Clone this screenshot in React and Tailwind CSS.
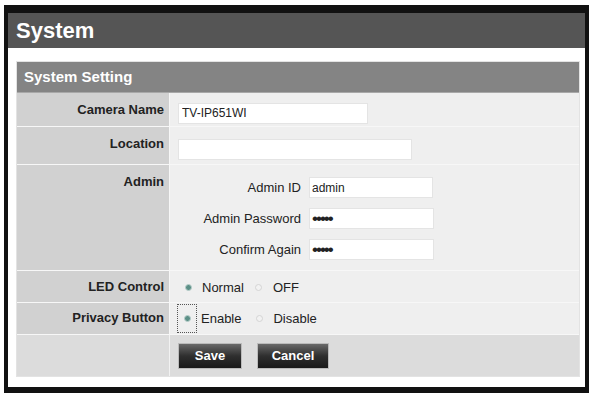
import { useState } from 'react'

function Radio({ checked, focused, label }) {
  return (
    <label className="flex items-center">
      <span
        className={`flex items-center justify-center w-[20px] h-[29px] ${
          focused ? 'border border-dotted border-[#555]' : 'border border-transparent'
        }`}
      >
        <span
          className={`w-[7px] h-[7px] rounded-full border ${
            checked ? 'bg-[#5b8f86] border-[#b9cfcb]' : 'bg-[#f2f2f2] border-[#d4d4d4]'
          }`}
        />
      </span>
      <span className="ml-[4px] text-[13px] text-[#222]">{label}</span>
    </label>
  )
}

function Row({ label, height, children, labelTop = 'pt-[7px]', last }) {
  return (
    <div className={`flex ${last ? '' : 'border-b border-[#f7f7f7]'}`} style={{ height }}>
      <div
        className={`w-[153px] shrink-0 bg-[#d1d1d1] text-right pr-[5px] ${labelTop} text-[13px] font-bold text-[#222] border-r border-[#f7f7f7]`}
      >
        {label}
      </div>
      <div className="flex-1 bg-[#efefef]">{children}</div>
    </div>
  )
}

function App() {
  const [cameraName, setCameraName] = useState('TV-IP651WI')
  const [location, setLocation] = useState('')
  const [adminId, setAdminId] = useState('admin')

  return (
    <div className="w-[590px] h-[395px] bg-white pt-[5px] pl-[4px] font-['Liberation_Sans',Arial,sans-serif]">
      <div className="w-[585px] h-[388px] border-t-[8px] border-b-[6px] border-x-[4px] border-[#111] flex flex-col">
        {/* Title bar */}
        <div className="h-[35px] bg-[#555555] flex items-center pl-[8px] shrink-0">
          <span className="text-[22px] font-bold text-white">System</span>
        </div>

        <div className="flex-1 bg-white pt-[13px] pl-[8px] pr-[4px]">
          <div className="w-[564px] border border-[#e3e3e3]">
            <div className="h-[31px] bg-[#848484] border-b border-[#a8a8a8] flex items-center pl-[7px]">
              <span className="text-[15px] font-bold text-white">System Setting</span>
            </div>

            <Row label="Camera Name" height={34}>
              <div className="pl-[8px] pt-[7px]">
                <input
                  value={cameraName}
                  onChange={(e) => setCameraName(e.target.value)}
                  className="w-[190px] h-[21px] bg-white border border-[#e4e4e4] px-[3px] text-[12px] text-[#222] outline-none"
                />
              </div>
            </Row>

            <Row label="Location" height={38}>
              <div className="pl-[8px] pt-[9px]">
                <input
                  value={location}
                  onChange={(e) => setLocation(e.target.value)}
                  className="w-[234px] h-[21px] bg-white border border-[#e4e4e4] px-[3px] text-[12px] outline-none"
                />
              </div>
            </Row>

            <Row label="Admin" height={106}>
              <div className="pt-[12px] flex flex-col gap-[10px]">
                <div className="flex items-center">
                  <span className="w-[139px] text-right text-[13px] text-[#222] pr-[8px]">Admin ID</span>
                  <input
                    value={adminId}
                    onChange={(e) => setAdminId(e.target.value)}
                    className="w-[124px] h-[21px] bg-white border border-[#e4e4e4] px-[2px] text-[12px] text-[#222] outline-none"
                  />
                </div>
                <div className="flex items-center">
                  <span className="w-[139px] text-right text-[13px] text-[#222] pr-[8px]">Admin Password</span>
                  <input
                    type="password"
                    defaultValue="admin"
                    className="w-[125px] h-[21px] bg-white border border-[#e4e4e4] px-[2px] text-[17px] tracking-[-2px] text-[#222] outline-none"
                  />
                </div>
                <div className="flex items-center">
                  <span className="w-[139px] text-right text-[13px] text-[#222] pr-[8px]">Confirm Again</span>
                  <input
                    type="password"
                    defaultValue="admin"
                    className="w-[125px] h-[21px] bg-white border border-[#e4e4e4] px-[2px] text-[17px] tracking-[-2px] text-[#222] outline-none"
                  />
                </div>
              </div>
            </Row>

            <Row label="LED Control" height={32} labelTop="pt-[6px]">
              <div className="flex items-center h-full pl-[8px] pt-[2px]">
                <Radio checked label="Normal" />
                <span className="w-[5px]" />
                <Radio label="OFF" />
              </div>
            </Row>

            <Row label="Privacy Button" height={32} labelTop="pt-[5px]">
              <div className="flex items-center h-full pl-[7px]">
                <Radio checked focused label="Enable" />
                <span className="w-[8px]" />
                <Radio label="Disable" />
              </div>
            </Row>

            <div className="flex h-[41px] bg-[#dcdcdc]">
              <div className="w-[153px] shrink-0 border-r border-[#f2f2f2]" />
              <div className="flex items-center pl-[8px] gap-[15px]">
                <button className="w-[64px] h-[26px] bg-gradient-to-b from-[#6a6a6a] via-[#2f2f2f] to-[#1a1a1a] border border-[#bbb] text-white text-[13px] font-bold">
                  Save
                </button>
                <button className="w-[72px] h-[26px] bg-gradient-to-b from-[#6a6a6a] via-[#2f2f2f] to-[#1a1a1a] border border-[#bbb] text-white text-[13px] font-bold">
                  Cancel
                </button>
              </div>
            </div>
          </div>
        </div>
      </div>
    </div>
  )
}

export default App
